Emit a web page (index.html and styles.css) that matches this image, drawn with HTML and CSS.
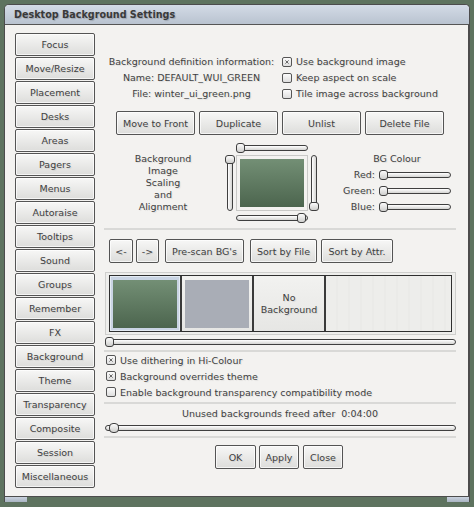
FILE: index.html
```html
<!DOCTYPE html>
<html>
<head>
<meta charset="utf-8">
<title>Desktop Background Settings</title>
<link rel="stylesheet" href="styles.css">
</head>
<body>
<div class="window">
  <div class="titlebar"><span class="title">Desktop Background Settings</span></div>
  <div class="content">
    <div class="sidebar">
      <div class="btn side">Focus</div>
      <div class="btn side">Move/Resize</div>
      <div class="btn side">Placement</div>
      <div class="btn side">Desks</div>
      <div class="btn side">Areas</div>
      <div class="btn side">Pagers</div>
      <div class="btn side">Menus</div>
      <div class="btn side">Autoraise</div>
      <div class="btn side">Tooltips</div>
      <div class="btn side">Sound</div>
      <div class="btn side">Groups</div>
      <div class="btn side">Remember</div>
      <div class="btn side">FX</div>
      <div class="btn side">Background</div>
      <div class="btn side">Theme</div>
      <div class="btn side">Transparency</div>
      <div class="btn side">Composite</div>
      <div class="btn side">Session</div>
      <div class="btn side">Miscellaneous</div>
    </div>
    <div class="main">
      <div class="row-info">
        <div class="info">
          <div>Background definition information:</div>
          <div>Name: DEFAULT_WUI_GREEN</div>
          <div>File: winter_ui_green.png</div>
        </div>
        <div class="checks">
          <div class="check"><span class="box"><svg viewBox="0 0 10 10"><path d="M3 3L7 7M7 3L3 7"/></svg></span>Use background image</div>
          <div class="check"><span class="box"></span>Keep aspect on scale</div>
          <div class="check"><span class="box"></span>Tile image across background</div>
        </div>
      </div>
      <div class="row-actions">
        <div class="btn act">Move to Front</div>
        <div class="btn act">Duplicate</div>
        <div class="btn act">Unlist</div>
        <div class="btn act">Delete File</div>
      </div>
      <div class="row-scale">
        <div class="scale-label">Background<br>Image<br>Scaling<br>and<br>Alignment</div>
        <div class="align">
          <div class="cell-empty"></div>
          <div class="hs"><span class="knob" style="left:0"></span></div>
          <div class="cell-empty"></div>
          <div class="vs"><span class="vknob" style="top:0"></span></div>
          <div class="preview"><div class="green"></div></div>
          <div class="vs"><span class="vknob" style="bottom:0"></span></div>
          <div class="cell-empty"></div>
          <div class="hs"><span class="knob" style="right:2px"></span></div>
          <div class="cell-empty"></div>
        </div>
        <div class="colour">
          <div class="colour-title">BG Colour</div>
          <div class="crow"><span class="clabel">Red:</span><div class="hs cs"><span class="knob" style="left:0"></span></div></div>
          <div class="crow"><span class="clabel">Green:</span><div class="hs cs"><span class="knob" style="left:0"></span></div></div>
          <div class="crow"><span class="clabel">Blue:</span><div class="hs cs"><span class="knob" style="left:0"></span></div></div>
        </div>
      </div>
      <div class="sep sep1"></div>
      <div class="row-nav">
        <div class="btn nav w23">&lt;-</div>
        <div class="btn nav w22">-&gt;</div>
        <div class="btn nav w78">Pre-scan BG's</div>
        <div class="btn nav w66">Sort by File</div>
        <div class="btn nav w71">Sort by Attr.</div>
      </div>
      <div class="strip">
        <div class="strip-inner">
          <div class="thumb selected"><div class="green small"></div></div>
          <div class="thumb"><div class="grey"></div></div>
          <div class="thumb text">No<br>Background</div>
          <div class="thumb rest"></div>
        </div>
      </div>
      <div class="hs wide strip-slider"><span class="knob" style="left:0"></span></div>
      <div class="sep sep2"></div>
      <div class="opts">
        <div class="check"><span class="box"><svg viewBox="0 0 10 10"><path d="M3 3L7 7M7 3L3 7"/></svg></span>Use dithering in Hi-Colour</div>
        <div class="check"><span class="box"><svg viewBox="0 0 10 10"><path d="M3 3L7 7M7 3L3 7"/></svg></span>Background overrides theme</div>
        <div class="check"><span class="box"></span>Enable background transparency compatibility mode</div>
      </div>
      <div class="sep sep3"></div>
      <div class="freed">Unused backgrounds freed after&nbsp; 0:04:00</div>
      <div class="hs wide freed-slider"><span class="knob round" style="left:4px"></span></div>
      <div class="sep sep4"></div>
      <div class="row-ok">
        <div class="btn ok w41">OK</div>
        <div class="btn ok w40">Apply</div>
        <div class="btn ok w40 close">Close</div>
      </div>
    </div>
  </div>
  <div class="frame-bottom"><span class="grip"></span><span class="grip"></span></div>
</div>
</body>
</html>
```
FILE: styles.css
```css
html, body {
  margin: 0;
  padding: 0;
  background: #5e735f;
}
body {
  padding: 4px 0 0 4px;
  font-family: "DejaVu Sans", "Liberation Sans", sans-serif;
  font-size: 9.5px;
  color: #404040;
}
.window {
  width: 466px;
  height: 498px;
  box-sizing: border-box;
  background: #f3f2f0;
  border: 1px solid #4c4c4c;
  border-bottom: none;
  border-radius: 5px 5px 0 0;
  display: flex;
  flex-direction: column;
  overflow: hidden;
}
.titlebar {
  height: 19px;
  border-bottom: 1px solid #555;
  background: linear-gradient(#d3dbe6, #b9c3d0);
  display: flex;
  align-items: center;
  padding-left: 9px;
  flex: none;
}
.title {
  font-weight: bold;
  font-size: 9.6px;
  color: #3a3a3a;
  text-shadow: 1px 1px 1px rgba(0,0,0,0.18);
}
.content {
  display: flex;
  padding: 8px 0 0 10px;
  flex: 1;
  border-right: 1px solid #4c4c4c;
}
.btn {
  box-sizing: border-box;
  border: 1px solid #545454;
  border-radius: 2px;
  background: linear-gradient(#f7f7f6, #dddddb);
  box-shadow: inset 0 0 0 1px rgba(255,255,255,0.7);
  display: flex;
  align-items: center;
  justify-content: center;
  text-shadow: 1px 1px 1px rgba(0,0,0,0.09);
  white-space: nowrap;
  color: #404040;
}
.sidebar {
  width: 80px;
  display: flex;
  flex-direction: column;
}
.side {
  height: 23px;
  margin-bottom: 1px;
}
.main {
  width: 352px;
  margin-left: 9px;
  display: flex;
  flex-direction: column;
}
.row-info {
  display: flex;
  margin-top: 21px;
  line-height: 16px;
}
.info {
  width: 175px;
  text-align: center;
  text-shadow: 1px 1px 1px rgba(0,0,0,0.09);
}
.checks {
  margin-left: 3px;
}
.check {
  display: flex;
  align-items: center;
  height: 16px;
  white-space: nowrap;
  text-shadow: 1px 1px 1px rgba(0,0,0,0.09);
}
.box {
  width: 10px;
  height: 10px;
  box-sizing: border-box;
  border: 1px solid #555;
  border-radius: 2px;
  background: linear-gradient(#fbfbfb, #dedede);
  margin-right: 4px;
  display: flex;
  flex: none;
}
.box svg {
  width: 8px;
  height: 8px;
}
.box path {
  stroke: #444;
  stroke-width: 1;
  fill: none;
}
.row-actions {
  display: flex;
  gap: 4px;
  margin-top: 9px;
  margin-left: 12px;
}
.act {
  width: 79px;
  height: 24px;
}
.row-scale {
  display: flex;
  align-items: center;
  margin-top: 8px;
  height: 80px;
}
.scale-label {
  width: 118px;
  text-align: center;
  line-height: 12px;
  text-shadow: 1px 1px 1px rgba(0,0,0,0.09);
}
.align {
  margin-left: 3px;
  display: grid;
  grid-template-columns: 10px 72px 10px;
  grid-template-rows: 10px 56px 10px;
  column-gap: 1px;
  row-gap: 2px;
}
.hs {
  position: relative;
  height: 10px;
}
.hs::before {
  content: "";
  position: absolute;
  left: 0;
  right: 0;
  top: 2px;
  height: 6px;
  box-sizing: border-box;
  border: 1px solid #3f3f3f;
  border-radius: 3px;
  background: linear-gradient(#ffffff, #d4d4d2);
}
.knob {
  position: absolute;
  top: 0;
  width: 9px;
  height: 10px;
  box-sizing: border-box;
  border: 1px solid #3f3f3f;
  border-radius: 3px;
  background: linear-gradient(#fbfbfb, #cfcfcd);
}
.knob.round {
  width: 10px;
  border-radius: 4px;
}
.vs {
  position: relative;
  width: 9px;
}
.vs::before {
  content: "";
  position: absolute;
  top: 0;
  bottom: 0;
  left: 2px;
  width: 6px;
  box-sizing: border-box;
  border: 1px solid #3f3f3f;
  border-radius: 3px;
  background: linear-gradient(90deg, #ffffff, #d4d4d2);
}
.vknob {
  position: absolute;
  left: 0;
  width: 10px;
  height: 9px;
  box-sizing: border-box;
  border: 1px solid #3f3f3f;
  border-radius: 3px;
  background: linear-gradient(#fbfbfb, #cfcfcd);
}
.preview {
  box-sizing: border-box;
  border: 1px solid #c9c9c7;
  padding: 3px;
}
.green {
  width: 64px;
  height: 48px;
  background: linear-gradient(#738f75, #4c654e);
}
.colour {
  margin-left: 23px;
  width: 110px;
  line-height: 16px;
  text-shadow: 1px 1px 1px rgba(0,0,0,0.09);
}
.colour-title {
  text-align: center;
}
.crow {
  display: flex;
  align-items: center;
  height: 16px;
}
.clabel {
  width: 33px;
  text-align: right;
  margin-right: 4px;
}
.cs {
  width: 72px;
}
.sep {
  height: 2px;
  background: #d9d9d7;
  width: 352px;
}
.sep1 { margin-top: 5px; }
.row-nav {
  display: flex;
  margin-top: 9px;
  margin-left: 5px;
}
.nav { height: 24px; }
.w23 { width: 24px; }
.w22 { width: 23px; margin-left: 3px; }
.w78 { width: 79px; margin-left: 6px; }
.w66 { width: 67px; margin-left: 6px; }
.w71 { width: 72px; margin-left: 4px; }
.strip {
  margin-top: 9px;
  margin-left: 1px;
  width: 351px;
  height: 63px;
  box-sizing: border-box;
  border: 1px solid #cfcfcd;
  padding: 2px 3px 2px 3px;
  background: #eeeeec;
}
.strip-inner {
  height: 100%;
  box-sizing: border-box;
  border: 1px solid #2f2f2f;
  display: flex;
}
.thumb {
  width: 70px;
  border-right: 2px solid #3a3a3a;
  background: linear-gradient(#f2f2f0, #e6e6e4);
  display: flex;
  align-items: center;
  justify-content: center;
  flex: none;
}
.thumb.selected {
  background: #c9d4e3;
  box-shadow: inset 0 0 0 1px #e4ebf3;
}
.green.small {
  width: 64px;
  height: 48px;
}
.grey {
  width: 64px;
  height: 48px;
  background: #a9adb6;
}
.thumb.text {
  text-align: center;
  line-height: 12px;
  text-shadow: 1px 1px 1px rgba(0,0,0,0.09);
}
.thumb.rest {
  flex: 1;
  border-right: none;
  background: repeating-linear-gradient(90deg, #ededeb 0, #ededeb 10px, #eaeae8 10px, #eaeae8 12px);
}
.wide {
  width: 351px;
  margin-left: 1px;
}
.strip-slider { margin-top: 2px; }
.sep2 { margin-top: 3px; }
.opts {
  margin-top: 0;
  margin-left: 2px;
}
.sep3 { margin-top: 2px; }
.freed {
  text-align: center;
  height: 16px;
  line-height: 16px;
  margin-top: 2px;
  text-shadow: 1px 1px 1px rgba(0,0,0,0.09);
}
.freed-slider { margin-top: 1px; }
.sep4 { margin-top: 3px; }
.row-ok {
  display: flex;
  justify-content: center;
  margin-top: 7px;
  margin-left: -2px;
}
.ok { height: 24px; }
.w41 { width: 41px; }
.w40 { width: 40px; margin-left: 3px; }
.close { margin-left: 4px; }
.frame-bottom {
  height: 5px;
  flex: none;
  border-top: 1px solid #4c4c4c;
  display: flex;
  justify-content: space-between;
  background: #5e735f;
}
.grip {
  width: 22px;
  height: 5px;
  background: linear-gradient(#c9d2de, #a9b4c2);
}
```
